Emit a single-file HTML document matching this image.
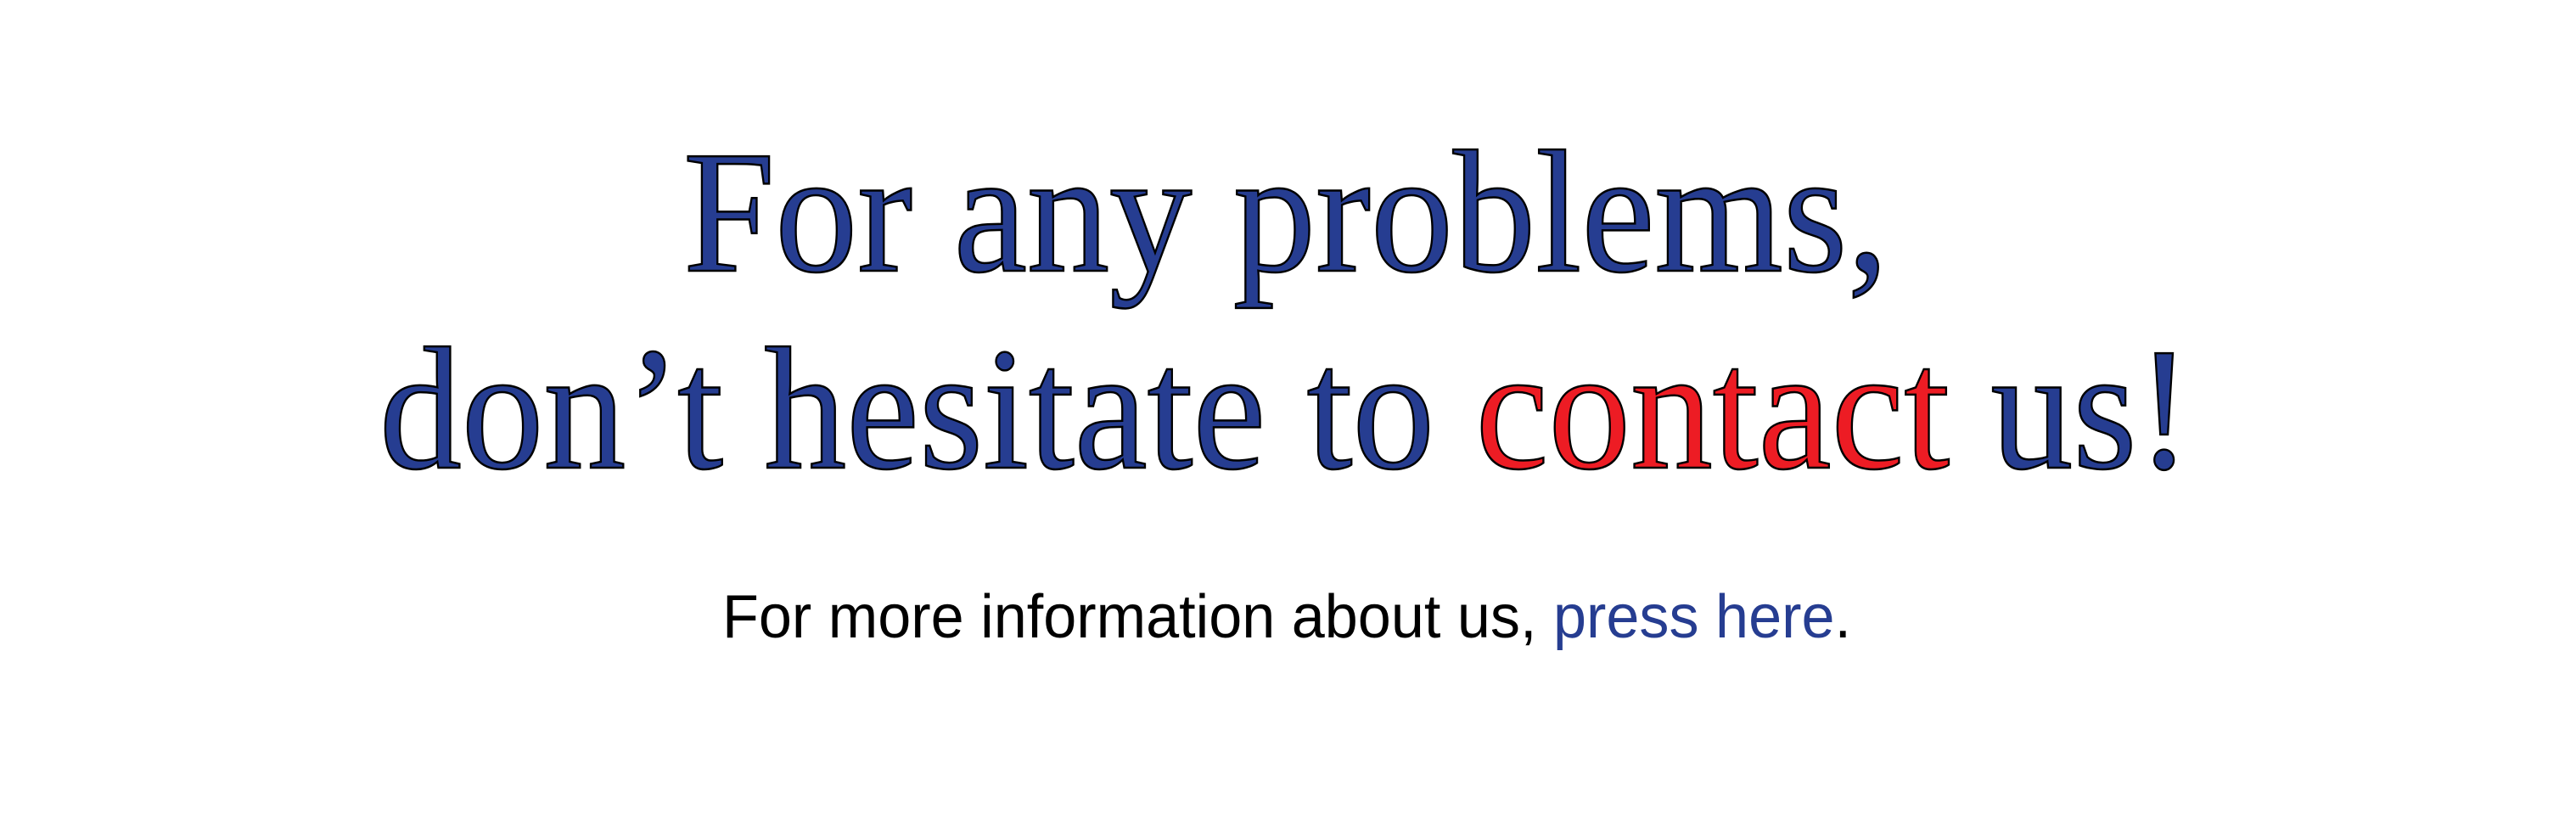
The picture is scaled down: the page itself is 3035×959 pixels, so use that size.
<!DOCTYPE html>
<html><head><meta charset="utf-8"><style>
html,body{margin:0;padding:0;background:#fff;width:3035px;height:959px;overflow:hidden}
svg{display:block}
</style></head><body>
<svg width="3035" height="959" viewBox="0 0 3035 959" xmlns="http://www.w3.org/2000/svg">
<g font-family="'Liberation Serif', serif" font-size="206" stroke="#000" stroke-width="2.5" fill="#263d91">
<text x="805" y="319" textLength="1420" lengthAdjust="spacingAndGlyphs">For any problems,</text>
<text x="447" y="551" textLength="2135" lengthAdjust="spacingAndGlyphs">don’t hesitate to <tspan fill="#ed1c24">contact</tspan> us!</text>
</g>
<text x="851" y="751" font-family="'Liberation Sans', sans-serif" font-size="72" fill="#000" textLength="1330" lengthAdjust="spacingAndGlyphs">For more information about us, <tspan fill="#263d91">press here</tspan>.</text>
</svg>
</body></html>
